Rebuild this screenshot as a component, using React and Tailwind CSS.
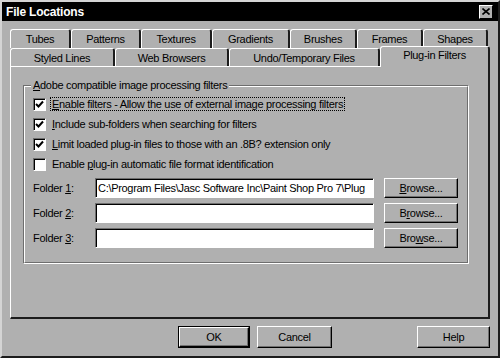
const tabsTop = [
  { label: 'Tubes', w: 'w-[61px]' },
  { label: 'Patterns', w: 'w-[70px]' },
  { label: 'Textures', w: 'w-[71px]' },
  { label: 'Gradients', w: 'w-[78px]' },
  { label: 'Brushes', w: 'w-[67px]' },
  { label: 'Frames', w: 'w-[66px]' },
  { label: 'Shapes', w: 'w-[65px]' },
]

const tabsBottom = [
  { label: 'Styled Lines', w: 'w-[105px]' },
  { label: 'Web Browsers', w: 'w-[114px]' },
  { label: 'Undo/Temporary Files', w: 'w-[151px]' },
]

function Tab({ label, w }) {
  return (
    <div className={`${w} h-full flex items-center justify-center pt-[1px] border-t border-l border-white border-r-2 border-r-[#1c1c1c] rounded-t-[3px]`}>
      {label}
    </div>
  )
}

function Check({ checked }) {
  return (
    <div className="w-[13px] h-[13px] bg-white border border-t-[#6e6e6e] border-l-[#6e6e6e] border-b-white border-r-white shadow-[inset_1px_1px_0_#000] flex items-center justify-center shrink-0">
      {checked && (
        <svg width="9" height="9" viewBox="0 0 9 9">
          <path d="M1 4 L3.5 6.5 L8 1.5" fill="none" stroke="#000" strokeWidth="2" />
        </svg>
      )}
    </div>
  )
}

function Button({ children, className = '' }) {
  return (
    <div className={`flex items-center justify-center border border-t-white border-l-white border-r-black border-b-black shadow-[inset_-1px_-1px_0_#707070] ${className}`}>
      {children}
    </div>
  )
}

function Field({ value }) {
  return (
    <div className="w-[279px] h-[20px] bg-white border border-t-[#6e6e6e] border-l-[#6e6e6e] border-b-white border-r-white shadow-[inset_1px_1px_0_#000] flex items-center pl-[2px] overflow-hidden whitespace-nowrap">
      {value}
    </div>
  )
}

export default function App() {
  const rows = [
    { key: 'E', rest: 'nable filters - Allow the use of external image processing filters', on: true, focus: true },
    { key: 'I', rest: 'nclude sub-folders when searching for filters', on: true },
    { key: 'L', rest: 'imit loaded plug-in files to those with an .8B? extension only', on: true },
  ]

  const folders = [
    { n: '1', value: 'C:\\Program Files\\Jasc Software Inc\\Paint Shop Pro 7\\Plug', browse: <><u>B</u>rowse...</> },
    { n: '2', value: '', browse: <>B<u>r</u>owse...</> },
    { n: '3', value: '', browse: <>Bro<u>w</u>se...</> },
  ]

  return (
    <div className="w-[500px] h-[358px] bg-[#b0b0b0] border-2 border-t-[#d4d4d4] border-l-[#d4d4d4] border-r-[#1c1c1c] border-b-[#1c1c1c] flex flex-col text-[11px] tracking-[-0.3px] text-black font-['Liberation_Sans',Arial,sans-serif] overflow-hidden">
      <div className="h-[19px] bg-black flex items-center justify-between pl-[4px] pr-[5px] shrink-0">
        <span className="text-white font-bold text-[12px] tracking-[-0.2px]">File Locations</span>
        <div className="w-[14px] h-[14px] bg-[#b0b0b0] border border-t-white border-l-white border-r-black border-b-black flex items-center justify-center">
          <svg width="8" height="7" viewBox="0 0 8 7">
            <path d="M0.5 0.5 L7.5 6.5 M7.5 0.5 L0.5 6.5" stroke="#000" strokeWidth="1.6" />
          </svg>
        </div>
      </div>

      <div className="flex flex-col pl-[8px] pr-[8px] pt-[8px]">
        <div className="h-[19px] flex">
          {tabsTop.map(t => <Tab key={t.label} {...t} />)}
        </div>
        <div className="h-[18px] flex items-start">
          {tabsBottom.map(t => <Tab key={t.label} {...t} />)}
          <div className="relative z-10 -mt-[2px] w-[110px] h-[21px] bg-[#b0b0b0] flex items-center justify-center pb-[3px] border-t border-l border-white border-r-2 border-r-[#1c1c1c] rounded-t-[3px]">
            Plug-in Filters
          </div>
        </div>

        <div className="h-[253px] border-t border-l border-white border-r-2 border-b-2 border-r-[#1c1c1c] border-b-[#1c1c1c] pt-[18px] pl-[12px] pr-[19px]">
          <div className="relative h-[179px] border border-t-[#6e6e6e] border-l-[#6e6e6e] border-b-white border-r-white">
            <div className="h-full border border-t-white border-l-white border-b-[#6e6e6e] border-r-[#6e6e6e] pt-[7px] pl-[8px]">
              {rows.map(r => (
                <div key={r.key} className="h-[20px] flex items-center gap-[4px]">
                  <Check checked={r.on} />
                  <span className={r.focus ? 'px-[1px] border border-dotted border-black leading-[12px]' : 'px-[1px] border border-transparent leading-[12px]'}>
                    <u>{r.key}</u>{r.rest}
                  </span>
                </div>
              ))}
              <div className="h-[20px] flex items-center gap-[4px]">
                <Check checked={false} />
                <span className="px-[1px] border border-transparent leading-[12px]">
                  Enable <u>p</u>lug-in automatic file format identification
                </span>
              </div>

              <div className="mt-[4px] flex flex-col gap-[5px]">
                {folders.map(f => (
                  <div key={f.n} className="flex items-center">
                    <span className="w-[62px]">Folder <u>{f.n}</u>:</span>
                    <Field value={f.value} />
                    <Button className="ml-[10px] w-[74px] h-[20px]">{f.browse}</Button>
                  </div>
                ))}
              </div>
            </div>
            <span className="absolute left-[7px] -top-[8px] bg-[#b0b0b0] px-[2px] leading-[14px]">
              <u>A</u>dobe compatible image processing filters
            </span>
          </div>
        </div>

        <div className="mt-[7px] flex">
          <div className="ml-[168px] border border-black">
            <Button className="w-[70px] h-[20px]">OK</Button>
          </div>
          <Button className="ml-[7px] w-[75px] h-[22px]">Cancel</Button>
          <Button className="ml-auto w-[73px] h-[22px]">Help</Button>
        </div>
      </div>
    </div>
  )
}
